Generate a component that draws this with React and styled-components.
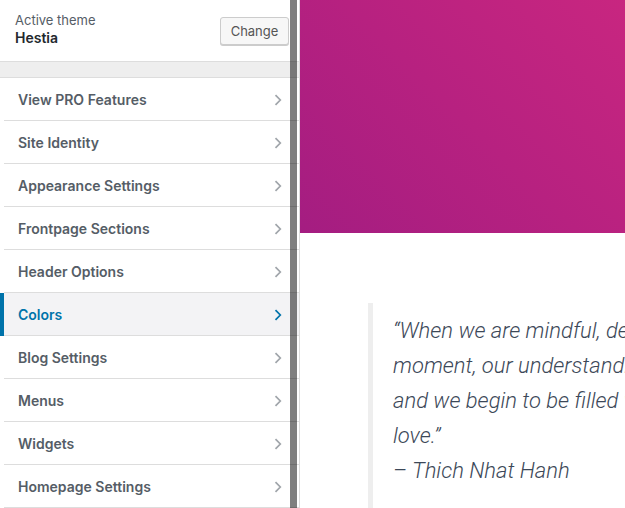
import React from "react";
import styled, { createGlobalStyle } from "styled-components";

const Global = createGlobalStyle`
  html, body { margin: 0; padding: 0; height: 100%; overflow: hidden; background: #fff; }
  #root { height: 100%; }
  * { box-sizing: border-box; }
`;

const Page = styled.div`
  display: flex;
  width: 625px;
  height: 508px;
  overflow: hidden;
`;

const Sidebar = styled.aside`
  position: relative;
  flex: 0 0 300px;
  width: 300px;
  height: 100%;
  background: #fff;
  border-right: 1px solid #ddd;
  font-family: Inter, "Liberation Sans", sans-serif;
  display: flex;
  flex-direction: column;
  overflow: hidden;
`;

const ThemeHeader = styled.div`
  display: flex;
  align-items: center;
  justify-content: space-between;
  height: 63px;
  padding: 0 10px 1px 15px;
  border-bottom: 1px solid #ddd;
`;

const ThemeInfo = styled.div`
  display: flex;
  flex-direction: column;
  gap: 1px;
  margin-top: -1px;
`;

const ThemeLabel = styled.span`
  font-size: 13px;
  line-height: 16px;
  color: #555d66;
`;

const ThemeName = styled.span`
  font-size: 14px;
  line-height: 18px;
  font-weight: 600;
  color: #23282d;
`;

const ChangeButton = styled.button`
  width: 69px;
  height: 28px;
  margin-top: 1px;
  border: 1px solid #ccc;
  border-radius: 3px;
  background: #f7f7f7;
  box-shadow: 0 1px 0 #ccc;
  color: #555;
  font-family: Inter, "Liberation Sans", sans-serif;
  font-size: 13px;
  padding: 0;
`;

const Band = styled.div`
  height: 16px;
  background: #eee;
  border-bottom: 1px solid #ddd;
`;

const List = styled.ul`
  list-style: none;
  margin: 0;
  padding: 0;
`;

const Row = styled.li`
  display: flex;
  height: 43px;
  border-left: 4px solid ${(p) => (p.$active ? "#0073aa" : "#fff")};
  background: ${(p) => (p.$active ? "#f3f3f5" : "#fff")};
  color: ${(p) => (p.$active ? "#0073aa" : "#555d66")};
  font-size: 14px;
  font-weight: 600;
`;

const RowInner = styled.div`
  flex: 1;
  display: flex;
  align-items: center;
  justify-content: space-between;
  padding: 1px 14px 0 14px;
  border-bottom: 1px solid #ddd;
`;

const Chevron = styled.svg`
  width: 10px;
  height: 12px;
  flex: none;
  margin-right: 2px;
  color: ${(p) => (p.$active ? "#0073aa" : "#a0a5aa")};
`;

const ScrollThumb = styled.div`
  position: absolute;
  top: 0;
  bottom: 0;
  left: 290px;
  width: 7px;
  background: rgba(0, 0, 0, 0.5);
`;

const Preview = styled.main`
  flex: 1;
  height: 100%;
  overflow: hidden;
  background: #fff;
`;

const Hero = styled.div`
  height: 233px;
  background: linear-gradient(45deg, #a41d81 0%, #b72180 50%, #c82680 100%);
`;

const Quote = styled.blockquote`
  margin: 70px 0 0 68px;
  padding: 10px 0 20px 20px;
  border-left: 5px solid #eee;
  font-family: Roboto, "Liberation Sans", sans-serif;
  font-style: italic;
  font-weight: 300;
  font-size: 22px;
  line-height: 35px;
  color: #3c4858;
  white-space: nowrap;
`;

const Line = styled.span`
  display: block;
`;

const items = [
  "View PRO Features",
  "Site Identity",
  "Appearance Settings",
  "Frontpage Sections",
  "Header Options",
  "Colors",
  "Blog Settings",
  "Menus",
  "Widgets",
  "Homepage Settings",
];

export default function App() {
  return (
    <>
      <Global />
      <Page>
        <Sidebar>
          <ThemeHeader>
            <ThemeInfo>
              <ThemeLabel>Active theme</ThemeLabel>
              <ThemeName>Hestia</ThemeName>
            </ThemeInfo>
            <ChangeButton>Change</ChangeButton>
          </ThemeHeader>
          <Band />
          <List>
            {items.map((label) => {
              const active = label === "Colors";
              return (
                <Row key={label} $active={active}>
                  <RowInner>
                    <span>{label}</span>
                    <Chevron $active={active} viewBox="0 0 10 12">
                      <path d="M2.5 1.2 L7.3 6 L2.5 10.8" fill="none" stroke="currentColor" strokeWidth="1.7" />
                    </Chevron>
                  </RowInner>
                </Row>
              );
            })}
          </List>
          <ScrollThumb />
        </Sidebar>
        <Preview>
          <Hero />
          <Quote>
            <Line>“When we are mindful, deeply in touch with the present</Line>
            <Line>moment, our understanding of what is going on deepens,</Line>
            <Line>and we begin to be filled with acceptance, joy, peace and</Line>
            <Line>love.”</Line>
            <Line>– Thich Nhat Hanh</Line>
          </Quote>
        </Preview>
      </Page>
    </>
  );
}
